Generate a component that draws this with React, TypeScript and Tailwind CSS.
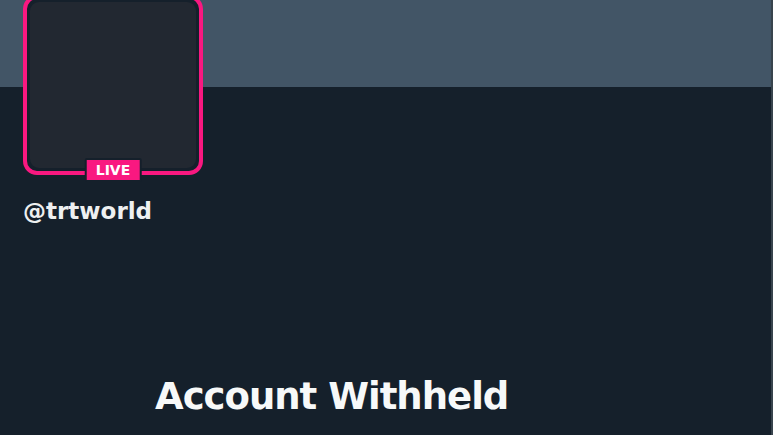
const App = () => {
  return (
    <div
      className="w-[773px] h-[435px] overflow-hidden bg-[#15202b] flex"
      style={{ fontFamily: '"DejaVu Sans", "Liberation Sans", sans-serif' }}
    >
      <div className="w-[771px] flex flex-col">
        {/* Banner */}
        <div className="h-[87px] bg-[#425566] shrink-0" />

        {/* Profile header */}
        <div className="px-[23px] -mt-[92px] flex flex-col">
          <div className="relative w-[180px] h-[180px] rounded-[14px] border-[4px] border-[#f91880] bg-[#15202b] p-[3px]">
            <div className="w-full h-full rounded-[9px] bg-[#222831]" />
            <div className="absolute left-1/2 -translate-x-1/2 -bottom-[11px] bg-[#f91880] px-[9px] h-[20px] flex items-center rounded-[2px] border-[2px] border-[#15202b] box-content">
              <span className="text-white text-[14px] font-bold leading-none">LIVE</span>
            </div>
          </div>
          <div className="mt-[22px] text-[#eef0f1] text-[23px] font-bold leading-[28px] tracking-[0px]">
            @trtworld
          </div>
        </div>

        {/* Withheld notice */}
        <div className="pl-[155px] mt-[150px]">
          <h1 className="text-[#f7f9f9] text-[37px] font-bold leading-[44px] tracking-[-1px]">
            Account Withheld
          </h1>
        </div>
      </div>
      <div className="w-[2px] bg-[#38444d]" />
    </div>
  );
};

export default App;
